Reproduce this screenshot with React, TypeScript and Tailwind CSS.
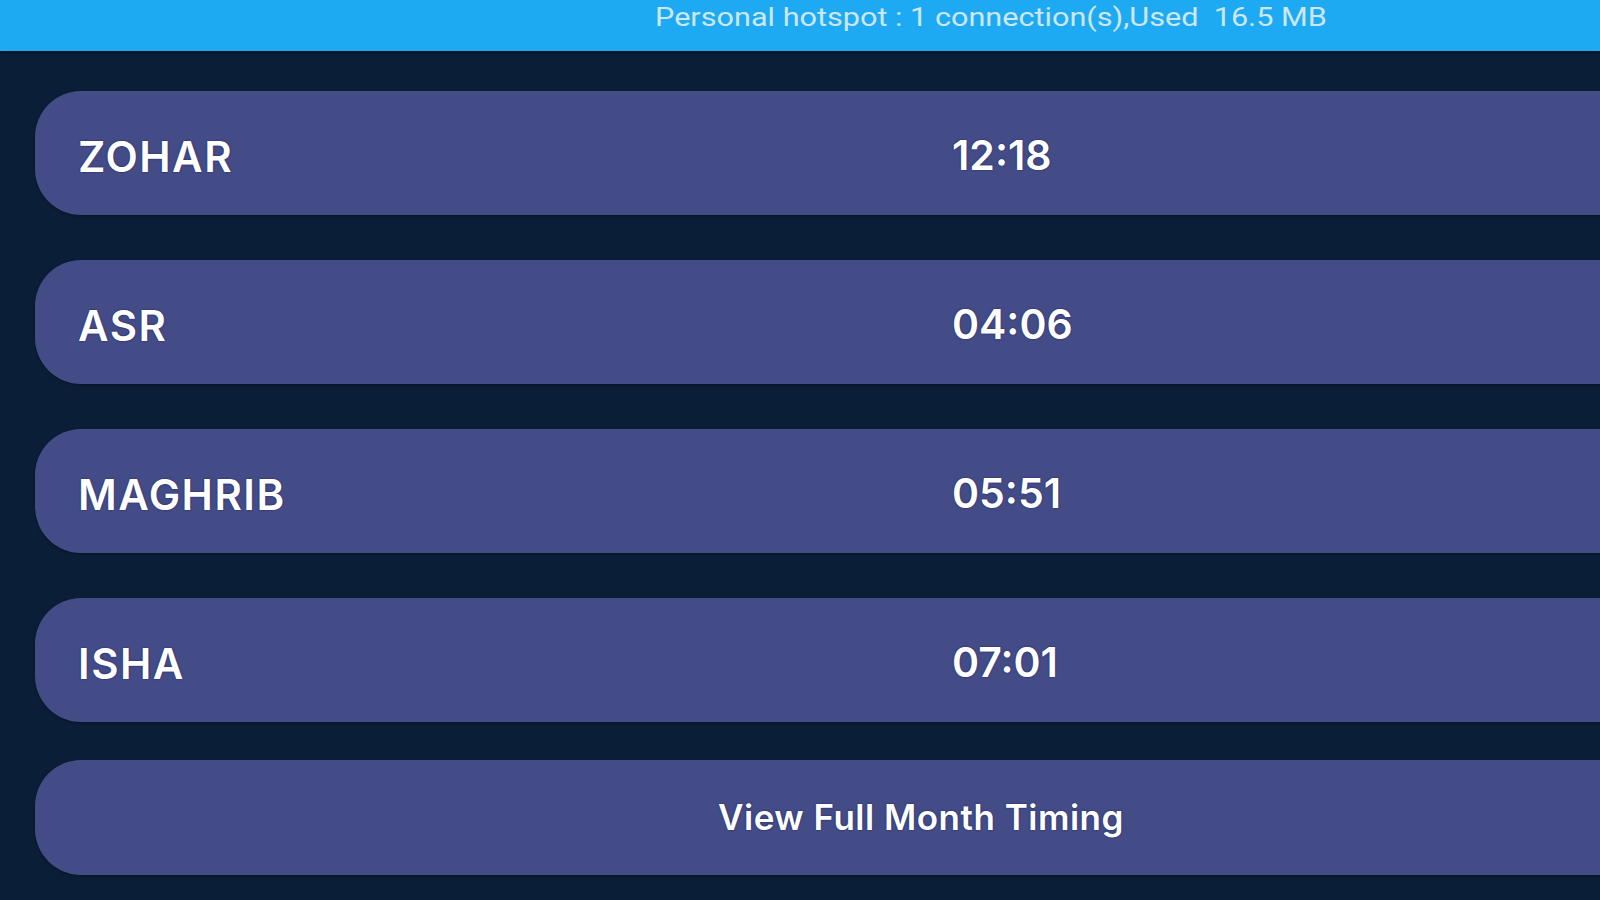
const prayers = [
  { name: 'ZOHAR', time: '12:18' },
  { name: 'ASR', time: '04:06' },
  { name: 'MAGHRIB', time: '05:51' },
  { name: 'ISHA', time: '07:01' },
]

export default function App() {
  return (
    <div className="h-[900px] w-[1600px] overflow-hidden bg-[#0a1f37] font-['Inter',sans-serif]">
      <div className="h-[51px] bg-[#1daaf2] pl-[655px] shadow-[0_2px_3px_rgba(0,0,0,0.35)]">
        <p className="origin-left scale-x-[1.225] pt-[3px] font-['Roboto',sans-serif] text-[25px] leading-[30px] whitespace-nowrap text-[#cde7f6]">
          Personal hotspot : 1 connection(s),Used&nbsp; 16.5 MB
        </p>
      </div>

      <div className="flex w-[1807px] flex-col pl-[35px] pt-[40px]">
        <div className="flex flex-col gap-[45px]">
          {prayers.map((p) => (
            <div
              key={p.name}
              className="flex h-[124px] items-center rounded-[46px] bg-[#444c88] pt-[6px] pl-[43px] shadow-[0_1px_3px_rgba(0,0,0,0.4)]"
            >
              <span className="w-[874px] text-[42px] font-semibold tracking-[1.5px] text-white [text-shadow:0_0_2px_rgba(10,20,80,0.8)]">
                {p.name}
              </span>
              <span className="text-[41px] font-semibold text-white [text-shadow:0_0_2px_rgba(10,20,80,0.8)]">
                {p.time}
              </span>
            </div>
          ))}
        </div>

        <button className="mt-[38px] flex h-[115px] items-center justify-center rounded-[46px] bg-[#444c88] text-[35px] font-semibold tracking-[0.5px] text-white shadow-[0_1px_3px_rgba(0,0,0,0.4)] [text-shadow:0_0_2px_rgba(10,20,80,0.8)]">
          View Full Month Timing
        </button>
      </div>
    </div>
  )
}
